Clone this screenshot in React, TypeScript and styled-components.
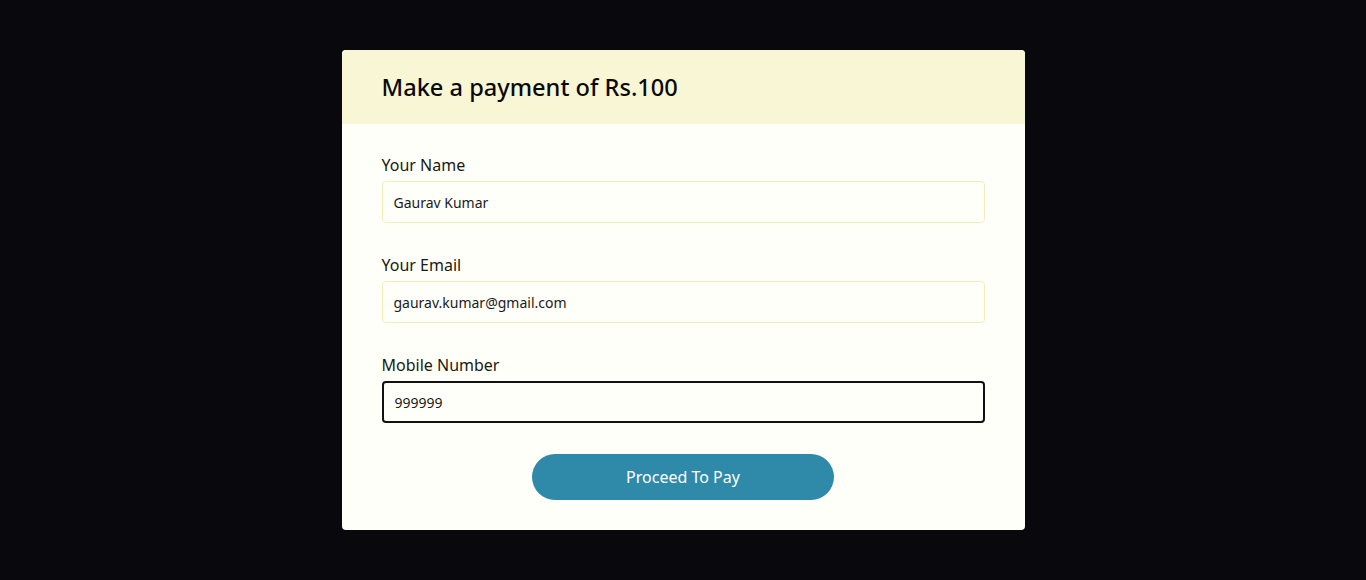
import React from "react";
import styled, { createGlobalStyle } from "styled-components";

const Global = createGlobalStyle`
  html, body { margin: 0; padding: 0; background: #08080d; }
  body { font-family: "Noto Sans", "Open Sans", sans-serif; }
  * { box-sizing: border-box; }
`;

const Page = styled.div`
  min-height: 580px;
  display: flex;
  justify-content: center;
  align-items: flex-start;
  padding-top: 50px;
`;

const Card = styled.form`
  width: 683px;
  background: #fffffa;
  border-radius: 4px;
  overflow: hidden;
`;

const Header = styled.div`
  height: 74px;
  background: #f9f6d6;
  display: flex;
  align-items: center;
  padding: 0 40px;
`;

const Title = styled.h2`
  margin: 0;
  font-size: 23.6px;
  font-weight: 500;
  color: #0a0a0a;
`;

const Body = styled.div`
  padding: 30px 40px 30px;
  display: flex;
  flex-direction: column;
  gap: 31px;
`;

const Field = styled.div`
  display: flex;
  flex-direction: column;
  gap: 5px;
`;

const Label = styled.label`
  font-size: 16px;
  line-height: 22px;
  color: #1a1a10;
`;

const Input = styled.input<{ $focused?: boolean }>`
  height: 42px;
  width: 100%;
  padding: 0 11px;
  font-family: "Noto Sans", sans-serif;
  font-size: 14px;
  color: #1a1a1a;
  background: #fffffa;
  border-radius: 4px;
  border: ${(p) => (p.$focused ? "2px solid #111" : "1px solid #f3eeb8")};
  outline: none;
  caret-color: #000;
`;

const Actions = styled.div`
  display: flex;
  justify-content: center;
`;

const Button = styled.button`
  width: 302px;
  height: 46px;
  border: none;
  border-radius: 23px;
  background: #2f8aa9;
  color: #fff;
  font-family: "Noto Sans", sans-serif;
  font-size: 16px;
  cursor: pointer;
`;

export default function App() {
  return (
    <>
      <Global />
      <Page>
        <Card onSubmit={(e) => e.preventDefault()}>
          <Header>
            <Title>Make a payment of Rs.100</Title>
          </Header>
          <Body>
            <Field>
              <Label>Your Name</Label>
              <Input defaultValue="Gaurav Kumar" />
            </Field>
            <Field>
              <Label>Your Email</Label>
              <Input defaultValue="gaurav.kumar@gmail.com" />
            </Field>
            <Field>
              <Label>Mobile Number</Label>
              <Input $focused defaultValue="999999" autoFocus />
            </Field>
            <Actions>
              <Button type="submit">Proceed To Pay</Button>
            </Actions>
          </Body>
        </Card>
      </Page>
    </>
  );
}
